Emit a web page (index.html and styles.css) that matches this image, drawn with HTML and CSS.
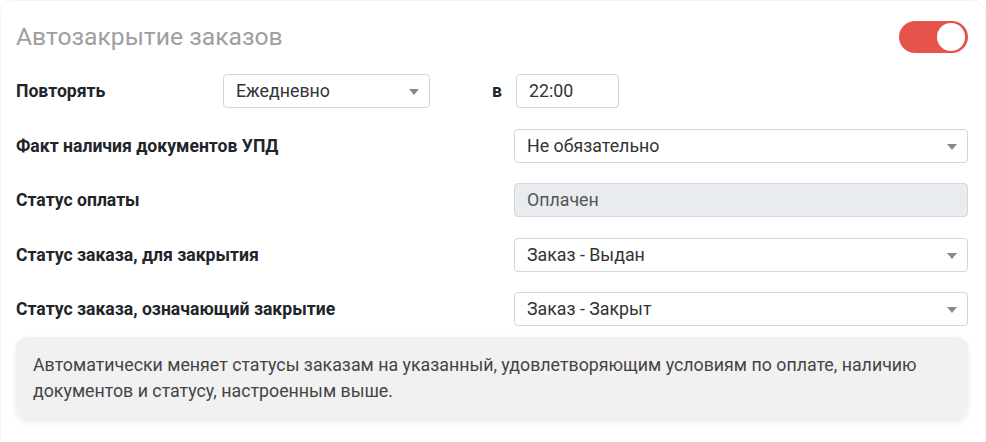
FILE: index.html
```html
<!DOCTYPE html>
<html lang="ru">
<head>
    <meta charset="UTF-8">
    <meta name="viewport" content="width=device-width, initial-scale=1.0">
    <title>Автозакрытие заказов</title>
    <link rel="stylesheet" href="styles.css">
</head>
<body>

<div class="card">
    <div class="card-header">
        <h2>Автозакрытие заказов</h2>
        <span class="toggle on"><span class="knob"></span></span>
    </div>

    <div class="rows">
        <div class="row row-repeat">
            <label class="label label-short">Повторять</label>
            <div class="select select-short">Ежедневно<span class="arrow"></span></div>
            <span class="at">в</span>
            <div class="input input-time">22:00</div>
        </div>

        <div class="row">
            <label class="label">Факт наличия документов УПД</label>
            <div class="select">Не обязательно<span class="arrow"></span></div>
        </div>

        <div class="row">
            <label class="label">Статус оплаты</label>
            <div class="input disabled">Оплачен</div>
        </div>

        <div class="row">
            <label class="label">Статус заказа, для закрытия</label>
            <div class="select">Заказ - Выдан<span class="arrow"></span></div>
        </div>

        <div class="row">
            <label class="label">Статус заказа, означающий закрытие</label>
            <div class="select">Заказ - Закрыт<span class="arrow"></span></div>
        </div>
    </div>

    <div class="note">
        Автоматически меняет статусы заказам на указанный, удовлетворяющим условиям по оплате, наличию документов и статусу, настроенным выше.
    </div>
</div>

</body>
</html>
```

FILE: styles.css
```css
body {
    font-family: Roboto, "Liberation Sans", sans-serif;
    background-color: #fff;
    margin: 0;
}
.card {
    box-sizing: border-box;
    height: 442px;
    padding: 20px 17px 0 15px;
    border: 1px solid #f4f4f4;
    border-bottom: none;
    border-radius: 14px 14px 0 0;
    background: white;
}
.card-header {
    display: flex;
    justify-content: space-between;
    align-items: center;
    height: 34px;
    margin-top: -1px;
}
h2 {
    margin: 0 0 2px;
    font-size: 24.7px;
    font-weight: 400;
    color: #9e9e9e;
}
.toggle {
    position: relative;
    width: 69px;
    height: 32px;
    border-radius: 16px;
    background-color: #e5534b;
}
.knob {
    position: absolute;
    top: 2px;
    right: 3px;
    width: 28px;
    height: 28px;
    border-radius: 50%;
    background: white;
}
.rows {
    display: flex;
    flex-direction: column;
    gap: 20.5px;
    margin-top: 20px;
}
.row {
    display: flex;
    align-items: center;
    height: 34px;
}
.label {
    width: 498px;
    flex-shrink: 0;
    font-size: 17.6px;
    font-weight: 700;
    color: #212529;
}
.label-short {
    width: 207px;
}
.select,
.input {
    position: relative;
    box-sizing: border-box;
    flex: 1;
    height: 34px;
    line-height: 32px;
    padding: 0 12px;
    border: 1px solid #d3d6da;
    border-radius: 4px;
    font-size: 17.8px;
    color: #333;
    background: white;
}
.select-short {
    flex: 0 0 207px;
}
.arrow {
    position: absolute;
    right: 10px;
    top: 14px;
    width: 0;
    height: 0;
    border-left: 5px solid transparent;
    border-right: 5px solid transparent;
    border-top: 6px solid #8a8a8a;
}
.at {
    width: 86px;
    text-align: right;
    padding-right: 14px;
    box-sizing: border-box;
    font-size: 17.6px;
    font-weight: 700;
    color: #212529;
}
.input-time {
    flex: 0 0 103px;
}
.disabled {
    background-color: #e9ecef;
    color: #555;
}
.note {
    margin-top: 11px;
    padding: 15px 17px 16px;
    background-color: #f1f1f1;
    border-radius: 12px;
    box-shadow: 0 2px 6px rgba(0, 0, 0, 0.08);
    font-size: 17.8px;
    line-height: 26px;
    color: #444;
}
```
